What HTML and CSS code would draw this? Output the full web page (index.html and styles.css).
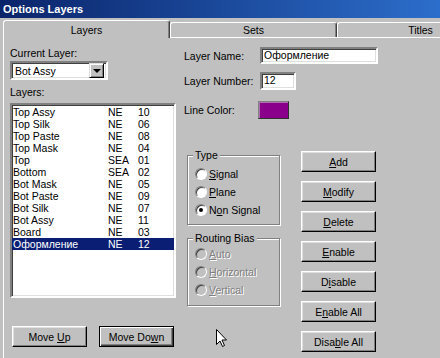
FILE: index.html
```html
<!DOCTYPE html>
<html lang="ru">
<head>
  <meta charset="UTF-8" />
  <title>Options Layers</title>
  <link rel="stylesheet" href="styles.css">
</head>
<body>
<div class="window">
  <div class="titlebar">Options Layers</div>

  <div class="tabs">
    <div class="tab active">Layers</div>
    <div class="tab">Sets</div>
    <div class="tab">Titles</div>
  </div>

  <div class="panel">
    <div class="left-col">
      <div class="label first">Current Layer:</div>
      <div class="combo sunken">
        <span class="combo-text">Bot Assy</span>
        <span class="combo-btn"><span class="arrow"></span></span>
      </div>

      <div class="label layers-label">Layers:</div>
      <div class="listbox sunken">
        <div class="row"><span>Top Assy</span><span>NE</span><span>10</span></div>
        <div class="row"><span>Top Silk</span><span>NE</span><span>06</span></div>
        <div class="row"><span>Top Paste</span><span>NE</span><span>08</span></div>
        <div class="row"><span>Top Mask</span><span>NE</span><span>04</span></div>
        <div class="row"><span>Top</span><span>SEA</span><span>01</span></div>
        <div class="row"><span>Bottom</span><span>SEA</span><span>02</span></div>
        <div class="row"><span>Bot Mask</span><span>NE</span><span>05</span></div>
        <div class="row"><span>Bot Paste</span><span>NE</span><span>09</span></div>
        <div class="row"><span>Bot Silk</span><span>NE</span><span>07</span></div>
        <div class="row"><span>Bot Assy</span><span>NE</span><span>11</span></div>
        <div class="row"><span>Board</span><span>NE</span><span>03</span></div>
        <div class="row selected"><span>Оформление</span><span>NE</span><span>12</span></div>
      </div>

      <div class="move-btns">
        <button class="btn">Move <u>U</u>p</button>
        <button class="btn default">Move Do<u>w</u>n</button>
      </div>
    </div>

    <div class="right-col">
      <div class="field name-row">
        <span class="field-label">Layer Name:</span>
        <div class="input sunken wide">Оформление</div>
      </div>
      <div class="field number-row">
        <span class="field-label">Layer Number:</span>
        <div class="input sunken narrow">12</div>
      </div>
      <div class="field color-row">
        <span class="field-label">Line Color:</span>
        <div class="swatch"></div>
      </div>

      <div class="lower">
        <div class="groups">
          <fieldset class="group type-group">
            <legend>Type</legend>
            <div class="option"><span class="radio"></span><span><u>S</u>ignal</span></div>
            <div class="option"><span class="radio"></span><span><u>P</u>lane</span></div>
            <div class="option"><span class="radio checked"></span><span>N<u>o</u>n Signal</span></div>
          </fieldset>
          <fieldset class="group bias-group">
            <legend>Routing Bias</legend>
            <div class="option disabled"><span class="radio"></span><span><u>A</u>uto</span></div>
            <div class="option disabled"><span class="radio"></span><span><u>H</u>orizontal</span></div>
            <div class="option disabled"><span class="radio"></span><span><u>V</u>ertical</span></div>
          </fieldset>
        </div>

        <div class="side-btns">
          <button class="btn"><u>A</u>dd</button>
          <button class="btn"><u>M</u>odify</button>
          <button class="btn"><u>D</u>elete</button>
          <button class="btn"><u>E</u>nable</button>
          <button class="btn">D<u>i</u>sable</button>
          <button class="btn">E<u>n</u>able All</button>
          <button class="btn">Disa<u>b</u>le All</button>
        </div>
      </div>
    </div>
  </div>

  <svg class="cursor" width="12" height="19" viewBox="0 0 12 19">
    <path d="M0.5 0.5 L0.5 15.5 L4 12 L6.5 17.5 L8.5 16.5 L6 11 L10.5 11 Z" fill="#fff" stroke="#000" stroke-width="1"/>
  </svg>
</div>
</body>
</html>
```

FILE: styles.css
```css
* {
  box-sizing: border-box;
}
body {
  margin: 0;
  background: #c0c0c0;
  color: #000;
  font-family: 'Liberation Sans', Arial, sans-serif;
  font-size: 10.5px;
}
.window {
  position: relative;
  width: 440px;
  height: 358px;
  overflow: hidden;
  background: #c0c0c0;
}
.titlebar {
  height: 18px;
  line-height: 19px;
  padding-left: 3px;
  color: #fff;
  font-size: 11px;
  font-weight: bold;
  background: linear-gradient(to right, #0a246a, #2c6ecb);
}
.tabs {
  display: flex;
  align-items: flex-end;
  height: 19px;
  padding-left: 3px;
}
.tab {
  flex: none;
  width: 167px;
  height: 15px;
  line-height: 14px;
  text-align: center;
  border: 1px solid #fff;
  border-bottom: none;
  border-right-color: #404040;
  border-radius: 3px 3px 0 0;
  box-shadow: inset -1px 0 #808080;
}
.tab.active {
  position: relative;
  z-index: 1;
  height: 18px;
  margin-bottom: -1px;
  padding-top: 3px;
  line-height: 13px;
  background: #c0c0c0;
}
.panel {
  display: flex;
  gap: 8px;
  height: 321px;
  margin-left: 3px;
  padding-left: 6px;
  border-top: 1px solid #fff;
  border-left: 1px solid #fff;
}

/* left column */
.left-col {
  width: 166px;
}
.label {
  line-height: 13px;
}
.label.first {
  margin-top: 9px;
}
.sunken {
  background: #fff;
  border: 2px solid;
  border-color: #808080 #fff #fff #808080;
  box-shadow: inset 1px 1px #404040, inset -1px -1px #dfdfdf;
}
.combo {
  display: flex;
  justify-content: space-between;
  width: 98px;
  height: 19px;
  margin-top: 1px;
  padding: 2px;
}
.combo-text {
  line-height: 13px;
  padding-left: 1px;
}
.combo-btn {
  display: flex;
  align-items: center;
  justify-content: center;
  width: 15px;
  height: 15px;
  margin-top: -2px;
  background: #c0c0c0;
  border: 1px solid;
  border-color: #dfdfdf #000 #000 #dfdfdf;
  box-shadow: inset 1px 1px #fff, inset -1px -1px #808080;
}
.arrow {
  width: 0;
  height: 0;
  border-left: 4px solid transparent;
  border-right: 4px solid transparent;
  border-top: 4px solid #000;
}
.layers-label {
  margin-top: 6px;
}
.listbox {
  width: 166px;
  height: 195px;
  margin-top: 4px;
  padding-top: 1px;
}
.row {
  display: grid;
  grid-template-columns: 95px 30px 1fr;
  height: 12px;
  line-height: 12px;
  padding-left: 1px;
}
.row.selected {
  background: #0a1f74;
  color: #fff;
}
.move-btns {
  display: flex;
  gap: 12px;
  margin-top: 28px;
  padding-left: 2px;
}

/* buttons */
.btn {
  width: 75px;
  height: 21px;
  padding: 0;
  font: inherit;
  color: #000;
  background: #c0c0c0;
  border: 1px solid;
  border-color: #fff #000 #000 #fff;
  box-shadow: inset -1px -1px #808080, inset 1px 1px #dfdfdf;
}
.btn.default {
  border-color: #000;
  box-shadow: inset 1px 1px #fff, inset -1px -1px #404040, inset -2px -2px #808080;
}

/* right column */
.right-col {
  flex: 1;
}
.field {
  display: flex;
  align-items: center;
}
.field-label {
  width: 76px;
}
.name-row {
  margin-top: 9px;
  height: 17px;
}
.number-row {
  margin-top: 8px;
  height: 18px;
}
.color-row {
  margin-top: 11px;
  height: 18px;
}
.input {
  height: 100%;
  padding: 0 2px;
  line-height: 13px;
}
.input.wide {
  width: 118px;
}
.input.narrow {
  width: 36px;
}
.swatch {
  width: 31px;
  height: 18px;
  margin-left: -2px;
  background: #8a008a;
  border: 1px solid;
  border-color: #808080 #303030 #303030 #808080;
  box-shadow: inset 1px 1px #b070b0;
}
.lower {
  display: flex;
  gap: 21px;
  margin-top: 32px;
  padding-left: 3px;
}
.groups {
  width: 93px;
  margin-top: -2px;
}
.group {
  margin: 0;
  padding: 3px 0 5px 7px;
  border: 1px solid #808080;
  box-shadow: inset 1px 1px #fff, 1px 1px #fff;
}
.group legend {
  margin-left: -2px;
  padding: 0 2px;
  line-height: 13px;
  background: #c0c0c0;
}
.bias-group {
  margin-top: 7px;
  padding-top: 0;
  padding-bottom: 6px;
}
.option {
  display: flex;
  align-items: center;
  gap: 2px;
  height: 18px;
}
.radio {
  position: relative;
  width: 12px;
  height: 12px;
  border-radius: 50%;
  background: #fff;
  border: 1px solid;
  border-color: #808080 #fff #fff #808080;
  box-shadow: inset 1px 1px #404040;
}
.radio.checked::after {
  content: "";
  position: absolute;
  left: 3px;
  top: 3px;
  width: 4px;
  height: 4px;
  border-radius: 50%;
  background: #000;
}
.option.disabled {
  color: #808080;
  text-shadow: 1px 1px #fff;
}
.option.disabled .radio {
  background: #c0c0c0;
}
.side-btns {
  display: flex;
  flex-direction: column;
  gap: 9px;
}
.cursor {
  position: absolute;
  left: 216px;
  top: 329px;
}
```
